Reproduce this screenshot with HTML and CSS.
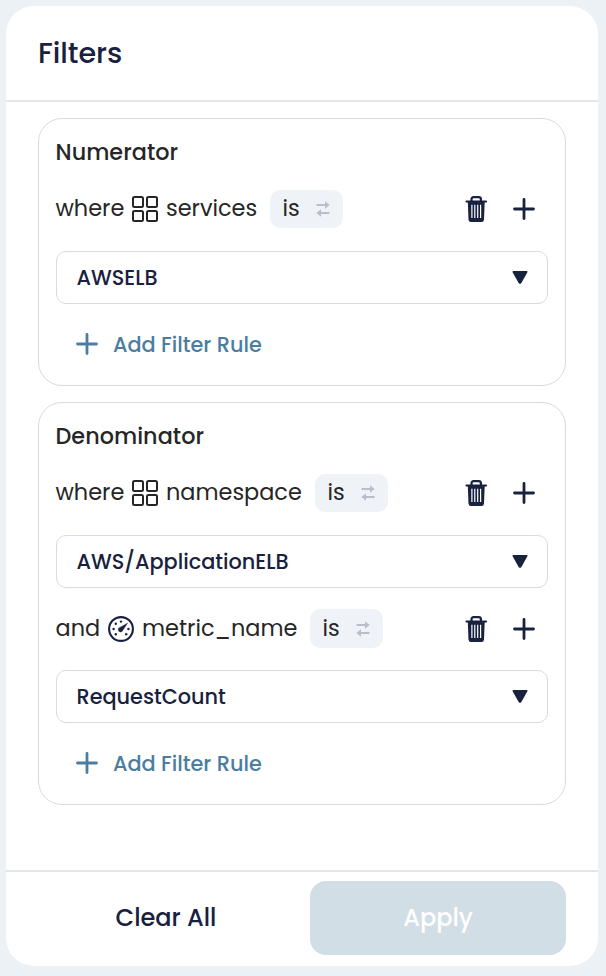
FILE: index.html
```html
<!DOCTYPE html>
<html lang="en">
<head>
<meta charset="utf-8">
<title>Filters</title>
<link rel="stylesheet" href="styles.css">
</head>
<body>
<svg class="sprite" aria-hidden="true">
  <symbol id="grid" viewBox="0 0 26 26"><g fill="none" stroke="currentColor" stroke-width="2"><rect x="1" y="1" width="10" height="10" rx="1.500"/><rect x="15" y="1" width="10" height="10" rx="1.500"/><rect x="1" y="15" width="10" height="10" rx="1.500"/><rect x="15" y="15" width="10" height="10" rx="1.500"/></g></symbol>
  <symbol id="gauge" viewBox="0 0 26 26"><circle cx="13" cy="13" r="11.9" fill="none" stroke="currentColor" stroke-width="2.1"/><path d="M19.5 7.2 14.8 14.2A2.3 2.3 0 1 1 12 11.4Z" fill="currentColor" stroke="currentColor" stroke-width=".5"/><g fill="currentColor"><circle cx="13" cy="5.6" r="1.2"/><circle cx="7.8" cy="7.8" r="1.2"/><circle cx="5.6" cy="13" r="1.2"/><circle cx="7.8" cy="18.2" r="1.2"/><circle cx="18.2" cy="18.2" r="1.2"/><circle cx="20.4" cy="13" r="1.2"/></g></symbol>
  <symbol id="swap" viewBox="0 0 14 16"><path d="M0.500 4h9.500M4 12h9.500" fill="none" stroke="currentColor" stroke-width="2"/><path d="M9 .2 13.600 4 9 7.800ZM5 8.200.4 12 5 15.800Z" fill="currentColor"/></symbol>
  <symbol id="trash" viewBox="0 0 22 26"><path d="M1.500 5.500h19.500M6.500 5V3.400Q6.500 1.200 8.700 1.200h5q2.200 0 2.200 2.200V5" fill="none" stroke="currentColor" stroke-width="2.200" stroke-linecap="round"/><path d="M2.800 5.500h16.900L19 23.500q-.2 2.500-2.500 2.500H6q-2.300 0-2.500-2.500Z" fill="currentColor"/><path d="M6.900 8.800v13.200M9.800 8.800v13.200M12.700 8.800v13.200M15.600 8.800v13.200" fill="none" stroke="#fff" stroke-width="1.200"/></symbol>
  <symbol id="plus" viewBox="0 0 22 22"><path d="M11 1.500v19M1.500 11h19" fill="none" stroke="currentColor" stroke-width="2.800" stroke-linecap="round"/></symbol>
  <symbol id="caret" viewBox="0 0 16 13"><path d="M1.200.8h13.600L8.600 12H7.400Z" fill="currentColor" stroke="currentColor" stroke-width="1.400" stroke-linejoin="round"/></symbol>
</svg>
<main class="panel">
  <header class="header"><h1 class="title">Filters</h1></header>
  <div class="content">
    <section class="group">
      <h2 class="group-title">Numerator</h2>
      <div class="rule">
        <span class="where">where</span><svg class="kind"><use href="#grid"/></svg><span class="field services">services</span>
        <button class="operator"><span class="is">is</span><svg class="swap"><use href="#swap"/></svg></button>
        <button class="icon-button trash"><svg><use href="#trash"/></svg></button>
        <button class="icon-button plus"><svg><use href="#plus"/></svg></button>
      </div>
      <button class="select"><span>AWSELB</span><svg><use href="#caret"/></svg></button>
      <button class="add"><svg><use href="#plus"/></svg><span>Add Filter Rule</span></button>
    </section>
    <section class="group">
      <h2 class="group-title">Denominator</h2>
      <div class="rule">
        <span class="where">where</span><svg class="kind"><use href="#grid"/></svg><span class="field namespace">namespace</span>
        <button class="operator"><span class="is">is</span><svg class="swap"><use href="#swap"/></svg></button>
        <button class="icon-button trash"><svg><use href="#trash"/></svg></button>
        <button class="icon-button plus"><svg><use href="#plus"/></svg></button>
      </div>
      <button class="select"><span>AWS/ApplicationELB</span><svg><use href="#caret"/></svg></button>
      <div class="rule next">
        <span class="and">and</span><svg class="kind gauge"><use href="#gauge"/></svg><span class="field metric">metric_name</span>
        <button class="operator"><span class="is">is</span><svg class="swap"><use href="#swap"/></svg></button>
        <button class="icon-button trash"><svg><use href="#trash"/></svg></button>
        <button class="icon-button plus"><svg><use href="#plus"/></svg></button>
      </div>
      <button class="select"><span>RequestCount</span><svg><use href="#caret"/></svg></button>
      <button class="add"><svg><use href="#plus"/></svg><span>Add Filter Rule</span></button>
    </section>
  </div>
  <footer class="footer"><button class="clear">Clear All</button><button class="apply">Apply</button></footer>
</main>
</body>
</html>
```
FILE: styles.css
```css
* { box-sizing: border-box; }
body { margin: 0; padding: 6px 8px 10px 6px; height: 976px; background: #ecf1f5; font-family: Poppins, Inter, sans-serif; color: #262626; }
button { font: inherit; border: 0; background: none; padding: 0; color: #18213d; }
svg { display: block; flex: none; }
span { white-space: nowrap; }
.sprite { display: none; }
.panel { width: 592px; height: 960px; background: #fff; border-radius: 28px; display: flex; flex-direction: column; overflow: hidden; }
.header { height: 96px; border-bottom: 2px solid #e5e6ea; padding: 0 32px; display: flex; align-items: center; }
.title { margin: 0; font-size: 28.6px; font-weight: 500; line-height: 42px; color: #18213d; }
.content { flex: 1; padding: 16px 32px; display: flex; flex-direction: column; gap: 16px; }
.group { border: 1px solid #d9dae2; border-radius: 24px; padding: 17px 17px 22px; }
.group-title { margin: 0 0 0 -.5px; font-size: 22.3px; letter-spacing: .05px; line-height: 34px; font-weight: 500; }
.rule { display: flex; align-items: center; height: 38px; margin-top: 20px; font-size: 22.4px; }
.rule > span, .is { padding-bottom: 2px; margin-left: -.5px; margin-right: .5px; }
.rule > .field { margin-left: 0; margin-right: 0; }
.next { height: 39px; margin-top: 21px; }
.next > span, .next .is { padding-bottom: 1px; }
.where { width: 76px; }
.and { width: 52px; }
.kind { width: 26px; height: 26px; margin-right: 8px; }
.gauge { color: #18213d; }
.services { width: 91px; }
.namespace { width: 136px; }
.metric { width: 155px; }
.operator { width: 73px; height: 38px; margin-left: 13px; background: #eff2f7; border-radius: 10px; padding: 0 13px; display: flex; align-items: center; justify-content: space-between; color: #262626; }
.next .operator { height: 39px; }
.swap { width: 14px; height: 16px; color: #babdca; }
.icon-button { display: flex; }
.trash { margin-left: auto; margin-right: 26px; }
.trash svg { width: 22px; height: 26px; }
.plus { margin-right: 13px; }
.plus svg, .add svg { width: 22px; height: 22px; }
.select { width: 100%; height: 53px; margin-top: 23px; border: 1px solid #d9dae2; border-radius: 10px; padding: 0 19px 0 19.5px; display: flex; align-items: center; justify-content: space-between; font-size: 20.8px; font-weight: 500; }
.next + .select { margin-top: 22px; }
.select svg { width: 16px; height: 13px; }
.add { display: flex; align-items: center; gap: 15px; height: 38px; margin: 21px 0 0 20px; color: #4b7da0; font-size: 20.8px; font-weight: 500; }
.footer { height: 96px; border-top: 2px solid #e1e6ec; padding: 9px 32px 11px; display: flex; gap: 16px; }
.clear, .apply { width: 256px; height: 74px; padding-bottom: 2px; font-size: 24px; font-weight: 500; }
.apply { color: #fff; background: #d2dee6; border-radius: 16px; }
```
